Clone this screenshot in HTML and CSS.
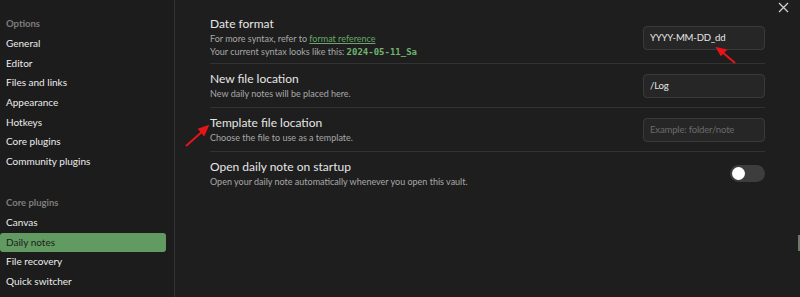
FILE: index.html
```html
<!DOCTYPE html>
<html lang="en">
<head>
  <meta charset="UTF-8" />
  <title>Settings - Daily notes</title>
  <link rel="stylesheet" href="styles.css">
</head>
<body>
  <div class="modal">
    <nav class="sidebar">
      <div class="nav-group">Options</div>
      <div class="nav-item">General</div>
      <div class="nav-item">Editor</div>
      <div class="nav-item">Files and links</div>
      <div class="nav-item">Appearance</div>
      <div class="nav-item">Hotkeys</div>
      <div class="nav-item">Core plugins</div>
      <div class="nav-item">Community plugins</div>
      <div class="nav-group spaced">Core plugins</div>
      <div class="nav-item">Canvas</div>
      <div class="nav-item active">Daily notes</div>
      <div class="nav-item">File recovery</div>
      <div class="nav-item">Quick switcher</div>
    </nav>

    <main class="content">
      <div class="setting">
        <div class="setting-info">
          <div class="setting-name">Date format</div>
          <div class="setting-desc">
            For more syntax, refer to <a href="#">format reference</a><br>
            Your current syntax looks like this: <span class="sample">2024-05-11_Sa</span>
          </div>
        </div>
        <input class="text-input" type="text" value="YYYY-MM-DD_dd">
      </div>

      <div class="setting">
        <div class="setting-info">
          <div class="setting-name">New file location</div>
          <div class="setting-desc">New daily notes will be placed here.</div>
        </div>
        <input class="text-input" type="text" value="/Log">
      </div>

      <div class="setting">
        <div class="setting-info">
          <div class="setting-name">Template file location</div>
          <div class="setting-desc">Choose the file to use as a template.</div>
        </div>
        <input class="text-input" type="text" placeholder="Example: folder/note">
      </div>

      <div class="setting">
        <div class="setting-info">
          <div class="setting-name">Open daily note on startup</div>
          <div class="setting-desc">Open your daily note automatically whenever you open this vault.</div>
        </div>
        <div class="toggle"><div class="knob"></div></div>
      </div>
    </main>

    <button class="close" aria-label="Close">
      <svg width="11" height="11" viewBox="0 0 11 11"><path d="M1 1L10 10M10 1L1 10" stroke="#cfcfcf" stroke-width="1.3"/></svg>
    </button>

    <!-- annotation arrows -->
    <svg class="arrows" width="800" height="297" viewBox="0 0 800 297">
      <path d="M735 63L721 51" stroke="#e8141b" stroke-width="2"/>
      <path d="M717 48L726 50L721 55Z" fill="#e8141b" stroke="#e8141b" stroke-width="1.5"/>
      <path d="M186 146L204 130" stroke="#e8141b" stroke-width="2"/>
      <path d="M208 126L204 135L199 129Z" fill="#e8141b" stroke="#e8141b" stroke-width="1.5"/>
    </svg>
    <div class="scroll-thumb"></div>
  </div>
</body>
</html>
```

FILE: styles.css
```css
* {
  box-sizing: border-box;
  margin: 0;
  padding: 0;
}

body {
  background: #1e1e1e;
  font-family: Lato, "Noto Sans", sans-serif;
  color: #dadada;
  overflow: hidden;
}

.modal {
  position: relative;
  display: flex;
  width: 800px;
  height: 297px;
  background: #1e1e1e;
}

.sidebar {
  width: 175px;
  flex-shrink: 0;
  background: #1c1c1c;
  border-right: 1px solid #333;
  padding: 13px 8px 0 0;
}

.nav-group {
  font-size: 9.5px;
  font-weight: 700;
  color: #7d7d7d;
  padding: 0 6px;
  height: 21px;
  line-height: 21px;
}

.nav-group.spaced {
  margin-top: 20px;
}

.nav-item {
  font-size: 10px;
  color: #ececec;
  padding: 0 6px;
  height: 19.7px;
  line-height: 19.7px;
  border-radius: 3px;
}

.nav-item.active {
  background: #629b62;
  color: #1b1b1b;
}

.content {
  flex: 1;
  padding: 14px 35px 0 35px;
}

.setting {
  display: flex;
  align-items: center;
  justify-content: space-between;
  padding: 7px 0;
  border-bottom: 1px solid #333;
}

.setting:first-child {
  padding: 2px 0 4px;
}

.setting:last-child {
  border-bottom: none;
}

.setting-name {
  font-size: 12px;
  color: #e6e6e6;
  line-height: 16px;
}

.setting-desc {
  font-size: 9px;
  color: #a8a8a8;
  line-height: 13px;
}

.setting-desc a {
  color: #6aa56a;
}

.sample {
  font-family: "DejaVu Sans Mono", monospace;
  font-weight: 700;
  font-size: 9px;
  color: #6fb36f;
}

.text-input {
  width: 122px;
  height: 24px;
  background: #262626;
  border: 1px solid #3a3a3a;
  border-radius: 4px;
  color: #e6e6e6;
  font-family: inherit;
  font-size: 9.6px;
  letter-spacing: -0.2px;
  padding: 0 6px;
  outline: none;
}

.text-input::placeholder {
  color: #6a6a6a;
}

.toggle {
  width: 35px;
  height: 17px;
  border-radius: 9px;
  background: #3d3d3d;
  padding: 2px;
  margin: 3px 0;
}

.knob {
  width: 13px;
  height: 13px;
  border-radius: 50%;
  background: #fff;
}

.close {
  position: absolute;
  top: 1px;
  right: 11px;
  width: 11px;
  height: 11px;
  background: none;
  border: none;
}

.arrows {
  position: absolute;
  left: 0;
  top: 0;
  pointer-events: none;
}

.scroll-thumb {
  position: absolute;
  right: 0;
  top: 235px;
  width: 2px;
  height: 16px;
  background: #6d7a6a;
}
```
